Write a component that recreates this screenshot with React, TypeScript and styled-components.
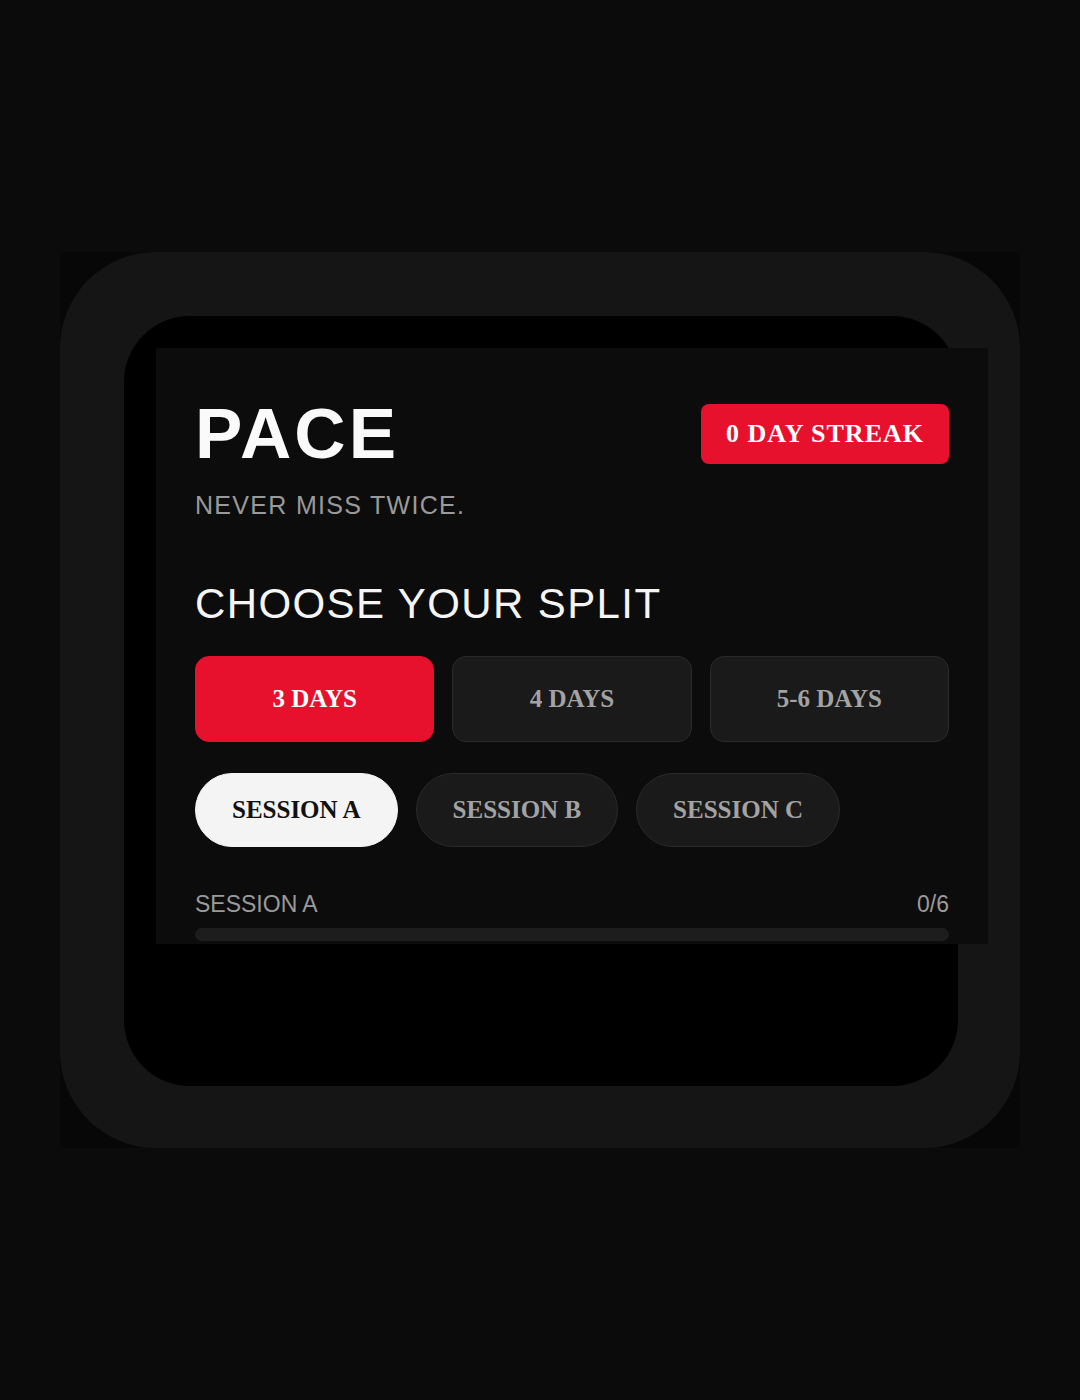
import React, { useState } from "react";
import styled, { createGlobalStyle } from "styled-components";

const GlobalStyle = createGlobalStyle`
  html, body {
    margin: 0;
    padding: 0;
    background: #0b0b0b;
  }
  * { box-sizing: border-box; }
`;

const Page = styled.div`
  min-height: 1400px;
  display: flex;
  align-items: center;
  justify-content: center;
`;

const Stage = styled.div`
  width: 960px;
  height: 896px;
  background: #070707;
`;

const Frame = styled.div`
  width: 100%;
  height: 100%;
  background: #151515;
  border-radius: 96px;
  padding: 64px 62px 62px 64px;
`;

const Screen = styled.div`
  width: 100%;
  height: 100%;
  background: #000;
  border-radius: 66px;
  padding: 32px;
`;

const Panel = styled.div`
  width: 832px;
  height: 596px;
  overflow: hidden;
  background: #0c0c0c;
  padding: 40px 39px 0 39px;
  font-family: "Liberation Sans", Arial, sans-serif;
`;

const Header = styled.div`
  display: flex;
  align-items: center;
  justify-content: space-between;
  margin-top: 10px;
`;

const Logo = styled.h1`
  margin: 0;
  font-size: 71px;
  line-height: 72px;
  font-weight: 700;
  letter-spacing: 3px;
  color: #fafafa;
`;

const Streak = styled.div`
  background: #e8112d;
  color: #fff;
  border-radius: 8px;
  height: 60px;
  padding: 0 25px;
  display: flex;
  align-items: center;
  font-family: "Liberation Serif", "Times New Roman", serif;
  font-weight: 700;
  font-size: 26px;
  letter-spacing: 1px;
`;

const Tagline = styled.p`
  margin: 21px 0 0;
  font-size: 25px;
  letter-spacing: 1.3px;
  color: #9a9a9a;
`;

const SectionTitle = styled.h2`
  margin: 60px 0 0;
  font-size: 42px;
  font-weight: 400;
  letter-spacing: 1.4px;
  color: #f5f5f5;
  line-height: 48px;
`;

const SplitGrid = styled.div`
  display: grid;
  grid-template-columns: repeat(3, 1fr);
  gap: 18px;
  margin-top: 28px;
`;

const SplitButton = styled.button<{ $active?: boolean }>`
  height: 86px;
  border-radius: 14px;
  border: 1px solid ${(p) => (p.$active ? "#e8112d" : "#2a2a2a")};
  background: ${(p) => (p.$active ? "#e8112d" : "#1a1a1a")};
  color: ${(p) => (p.$active ? "#fff" : "#a3a3a3")};
  font-family: "Liberation Serif", "Times New Roman", serif;
  font-weight: 700;
  font-size: 25px;
  cursor: pointer;
`;

const SessionRow = styled.div`
  display: flex;
  gap: 18px;
  margin-top: 31px;
`;

const SessionPill = styled.button<{ $active?: boolean }>`
  height: 74px;
  padding: 0 36px;
  border-radius: 37px;
  border: 1px solid ${(p) => (p.$active ? "#f4f4f4" : "#2a2a2a")};
  background: ${(p) => (p.$active ? "#f4f4f4" : "#1a1a1a")};
  color: ${(p) => (p.$active ? "#111" : "#a3a3a3")};
  font-family: "Liberation Serif", "Times New Roman", serif;
  font-weight: 700;
  font-size: 25px;
  cursor: pointer;
`;

const ProgressHead = styled.div`
  display: flex;
  justify-content: space-between;
  align-items: baseline;
  margin-top: 44px;
  font-size: 23px;
  color: #9a9a9a;
`;

const Track = styled.div`
  margin-top: 10px;
  height: 13px;
  border-radius: 7px;
  background: #1d1d1d;
`;

const Fill = styled.div`
  height: 100%;
  border-radius: 7px;
  background: #e8112d;
`;

const splits = ["3 DAYS", "4 DAYS", "5-6 DAYS"];
const sessions = ["SESSION A", "SESSION B", "SESSION C"];

export default function App() {
  const [split, setSplit] = useState(0);
  const [session, setSession] = useState(0);
  const done = 0;
  const total = 6;

  return (
    <>
      <GlobalStyle />
      <Page>
        <Stage>
          <Frame>
            <Screen>
              <Panel>
                <Header>
                  <Logo>PACE</Logo>
                  <Streak>0 DAY STREAK</Streak>
                </Header>
                <Tagline>NEVER MISS TWICE.</Tagline>
                <SectionTitle>CHOOSE YOUR SPLIT</SectionTitle>
                <SplitGrid>
                  {splits.map((s, i) => (
                    <SplitButton key={s} $active={i === split} onClick={() => setSplit(i)}>
                      {s}
                    </SplitButton>
                  ))}
                </SplitGrid>
                <SessionRow>
                  {sessions.map((s, i) => (
                    <SessionPill key={s} $active={i === session} onClick={() => setSession(i)}>
                      {s}
                    </SessionPill>
                  ))}
                </SessionRow>
                <ProgressHead>
                  <span>{sessions[session]}</span>
                  <span>
                    {done}/{total}
                  </span>
                </ProgressHead>
                <Track>
                  <Fill style={{ width: `${(done / total) * 100}%` }} />
                </Track>
              </Panel>
            </Screen>
          </Frame>
        </Stage>
      </Page>
    </>
  );
}
